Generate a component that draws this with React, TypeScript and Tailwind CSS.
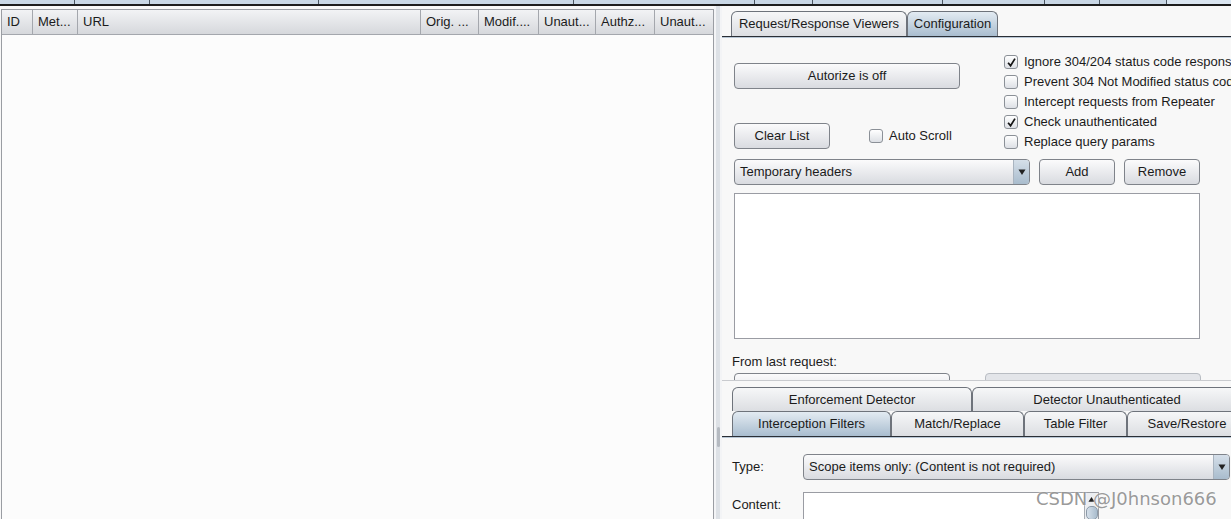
import React from 'react';

const columns = [
  { label: 'ID', w: 31 },
  { label: 'Met...', w: 45 },
  { label: 'URL', w: 343 },
  { label: 'Orig. ...', w: 58 },
  { label: 'Modif....', w: 60 },
  { label: 'Unaut...', w: 57 },
  { label: 'Authz...', w: 59 },
  { label: 'Unaut...', w: 59 },
];

const stripStops = [75, 75, 169, 255, 181, 58, 130, 102, 55, 67];

function CheckBox({ checked }: { checked?: boolean }) {
  return (
    <span className="inline-flex h-[14px] w-[14px] shrink-0 items-center justify-center rounded-[3px] border border-[#8b9097] bg-linear-to-b from-white to-[#dde0e5]">
      {checked && (
        <svg viewBox="0 0 12 12" className="h-[11px] w-[11px]">
          <path d="M2.3 6.2 L5 9.6 L9.8 1.8" fill="none" stroke="#151515" strokeWidth="1.9" />
        </svg>
      )}
    </span>
  );
}

function Btn({ children, w }: { children: React.ReactNode; w: string }) {
  return (
    <div
      className={`${w} flex h-[26px] shrink-0 items-center justify-center rounded-[4px] border border-[#7f838a] bg-linear-to-b from-[#fbfbfc] to-[#d9dbe0] text-[#1b1b1b]`}
    >
      {children}
    </div>
  );
}

function Combo({ text, w }: { text: string; w: string }) {
  return (
    <div className={`${w} flex h-[26px] shrink-0 overflow-hidden rounded-[4px] border border-[#7f838a] bg-linear-to-b from-[#fbfbfc] to-[#d9dbe0]`}>
      <div className="flex flex-1 items-center pl-[5px] text-[#1b1b1b]">{text}</div>
      <div className="flex w-[16px] items-center justify-center border-l border-[#a9b4c0] bg-linear-to-b from-[#d5dfe9] to-[#a9bccd]">
        <svg viewBox="0 0 8 8" className="h-[8px] w-[8px]">
          <path d="M0.5 1.5 H7.5 L4 7 Z" fill="#222" />
        </svg>
      </div>
    </div>
  );
}

function Tab({ label, w, selected }: { label: string; w: string; selected?: boolean }) {
  return (
    <div
      className={`${w} flex h-full shrink-0 items-center justify-center whitespace-nowrap rounded-t-[6px] border border-b-0 border-[#6e737b] ${
        selected
          ? 'bg-linear-to-b from-[#e3ebf2] to-[#a9bdcf]'
          : 'bg-linear-to-b from-[#f6f7f8] to-[#dcdee2]'
      } text-[#1b1b1b]`}
    >
      {label}
    </div>
  );
}

function CheckRow({ label, checked }: { label: string; checked?: boolean }) {
  return (
    <div className="flex h-[20px] items-center gap-[6px] whitespace-nowrap">
      <CheckBox checked={checked} />
      <span>{label}</span>
    </div>
  );
}

export default function App() {
  return (
    <div className="relative flex h-[519px] w-[1231px] flex-col overflow-hidden bg-[#f8f8f8] font-['Liberation_Sans',Arial,sans-serif] text-[13px] text-[#1b1b1b]">
      {/* top strip of the parent tab bar */}
      <div className="flex h-[4px] shrink-0 bg-[#c9d7e5]">
        {stripStops.map((w, i) => (
          <div key={i} style={{ width: w }} className="h-full border-r border-[#4a5560]" />
        ))}
        <div className="flex-1 bg-[#dbe6f1]" />
      </div>
      <div className="h-[2px] shrink-0 bg-[#1d1d1d]" />

      <div className="flex min-h-0 flex-1">
        {/* left: results table */}
        <div className="flex w-[714px] shrink-0 flex-col pt-[3px] pl-[1px]">
          <div className="flex flex-1 flex-col border border-b-0 border-[#9a9da3] bg-[#fcfcfc]">
            <div className="flex h-[25px] shrink-0 border-b border-[#a4a7ad] bg-linear-to-b from-[#f2f3f5] to-[#d6d8dc]">
              {columns.map((c, i) => (
                <div
                  key={i}
                  style={{ width: c.w }}
                  className="flex shrink-0 items-center overflow-hidden whitespace-nowrap border-r border-[#a4a7ad] pl-[5px] last:border-r-0"
                >
                  {c.label}
                </div>
              ))}
            </div>
            <div className="flex-1" />
          </div>
        </div>

        {/* split divider */}
        <div className="flex w-[8px] shrink-0 justify-center bg-[#f3f4f6]">
          <div className="relative h-full w-[4px] bg-[#dde1e6]">
            <div className="absolute top-[421px] left-[1px] h-[20px] w-[3px] rounded-[2px] bg-[#b5bac1]" />
          </div>
        </div>

        {/* right: configuration */}
        <div className="flex min-w-0 flex-1 flex-col overflow-hidden">
          <div className="flex h-[30px] shrink-0 items-end pt-[5px] pl-[9px]">
            <Tab label="Request/Response Viewers" w="w-[176px]" />
            <Tab label="Configuration" w="w-[91px]" selected />
          </div>
          <div className="h-[1px] shrink-0 bg-[#2a2f36]" />
          <div className="h-[1px] shrink-0 bg-[#b9c7d5]" />

          {/* top configuration section */}
          <div className="h-[343px] shrink-0 overflow-hidden border-b border-[#c9cbcf] pl-[12px]">
            <div className="flex">
              <div className="flex w-[270px] shrink-0 flex-col">
                <div className="mt-[25px]">
                  <Btn w="w-[226px]">Autorize is off</Btn>
                </div>
                <div className="mt-[34px] flex items-center">
                  <Btn w="w-[96px]">Clear List</Btn>
                  <div className="ml-[39px] flex items-center gap-[6px]">
                    <CheckBox />
                    <span>Auto Scroll</span>
                  </div>
                </div>
              </div>
              <div className="mt-[14px] flex flex-col">
                <CheckRow label="Ignore 304/204 status code responses" checked />
                <CheckRow label="Prevent 304 Not Modified status code" />
                <CheckRow label="Intercept requests from Repeater" />
                <CheckRow label="Check unauthenticated" checked />
                <CheckRow label="Replace query params" />
              </div>
            </div>
            <div className="mt-[7px] flex gap-[9px]">
              <Combo text="Temporary headers" w="w-[296px]" />
              <Btn w="w-[76px]">Add</Btn>
              <Btn w="w-[76px]">Remove</Btn>
            </div>
            <div className="mt-[8px] h-[146px] w-[466px] border border-[#9a9ca3] bg-white" />
            <div className="mt-[15px] -ml-[2px] leading-[15px]">From last request:</div>
            <div className="mt-[4px] flex gap-[35px]">
              <div className="h-[26px] w-[216px] rounded-[4px] border border-[#7f838a] bg-linear-to-b from-[#fbfbfc] to-[#d9dbe0]" />
              <div className="h-[26px] w-[216px] rounded-[4px] border border-[#b9bdc3] bg-[#e3e5e9]" />
            </div>
          </div>

          {/* bottom section */}
          <div className="flex min-h-0 flex-1 flex-col">
            <div className="mt-[6px] flex h-[24px] shrink-0 pl-[10px]">
              <Tab label="Enforcement Detector" w="w-[240px]" />
              <Tab label="Detector Unauthenticated" w="w-[270px]" />
            </div>
            <div className="flex h-[25px] shrink-0 pl-[10px]">
              <Tab label="Interception Filters" w="w-[159px]" selected />
              <Tab label="Match/Replace" w="w-[133px]" />
              <Tab label="Table Filter" w="w-[103px]" />
              <Tab label="Save/Restore" w="w-[120px]" />
            </div>
            <div className="h-[1px] shrink-0 bg-[#2a2f36]" />
            <div className="h-[1px] shrink-0 bg-[#b9c7d5]" />
            <div className="flex flex-col pl-[10px]">
              <div className="mt-[16px] flex items-center">
                <span className="w-[71px]">Type:</span>
                <Combo text="Scope items only: (Content is not required)" w="w-[427px]" />
              </div>
              <div className="mt-[12px] flex items-start">
                <span className="mt-[3px] w-[71px]">Content:</span>
                <div className="flex h-[40px] w-[296px] border border-[#9a9ca3] bg-white">
                  <div className="flex-1" />
                  <div className="flex w-[14px] flex-col border-l border-[#a8adb4] bg-[#eceef1]">
                    <div className="flex h-[13px] items-center justify-center">
                      <svg viewBox="0 0 8 8" className="h-[7px] w-[7px]">
                        <path d="M0.5 6.5 H7.5 L4 1 Z" fill="#222" />
                      </svg>
                    </div>
                    <div className="mx-auto h-[14px] w-[12px] rounded-[5px] border border-[#8c9aa8] bg-linear-to-r from-[#d6e0ea] to-[#a9bccd]" />
                  </div>
                </div>
              </div>
            </div>
          </div>
        </div>
      </div>

      {/* watermark overlay */}
      <div className="pointer-events-none absolute top-[487px] left-[1036px] whitespace-nowrap font-['DejaVu_Sans',sans-serif] text-[18px] leading-[24px] text-[#8d8d8d]/90 [text-shadow:0_0_2px_#ffffff]">
        CSDN @J0hnson666
      </div>
    </div>
  );
}
